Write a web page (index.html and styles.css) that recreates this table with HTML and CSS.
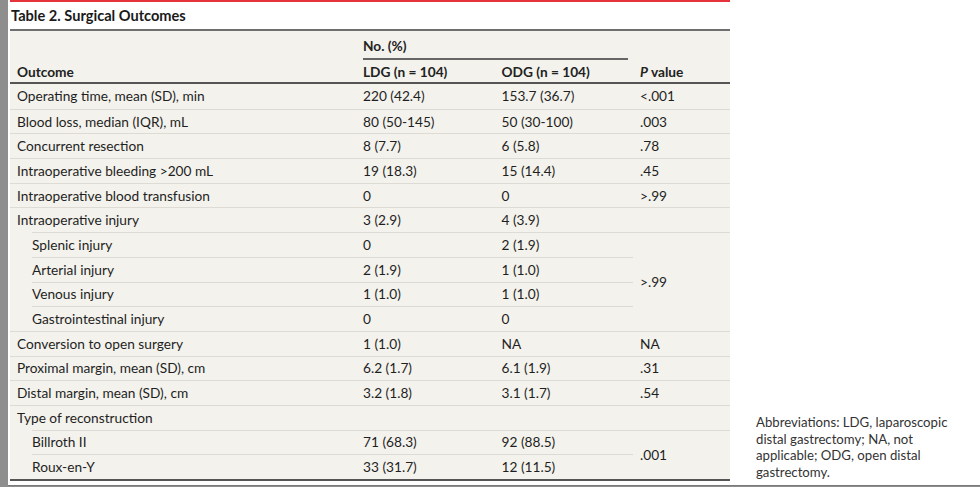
FILE: index.html
```html
<!DOCTYPE html>
<html lang="en">
<head>
<meta charset="utf-8">
<title>Table 2. Surgical Outcomes</title>
<link rel="stylesheet" href="styles.css">
</head>
<body>
<div class="page">
  <div class="strip"></div>
  <div class="panel">
    <div class="content">
      <div class="main">
        <div class="redbar"></div>
        <h2 class="title">Table 2. Surgical Outcomes</h2>
        <table class="data">
          <thead>
            <tr class="h1">
              <th rowspan="2" class="oc">Outcome</th>
              <th colspan="2" class="grp"><div class="grp-label">No. (%)</div></th>
              <th rowspan="2" class="pv"><i>P</i> value</th>
            </tr>
            <tr class="h2">
              <th>LDG (n = 104)</th>
              <th>ODG (n = 104)</th>
            </tr>
          </thead>
          <tbody>
            <tr class="first"><td>Operating time, mean (SD), min</td><td>220 (42.4)</td><td>153.7 (36.7)</td><td>&lt;.001</td></tr>
            <tr><td>Blood loss, median (IQR), mL</td><td>80 (50-145)</td><td>50 (30-100)</td><td>.003</td></tr>
            <tr><td>Concurrent resection</td><td>8 (7.7)</td><td>6 (5.8)</td><td>.78</td></tr>
            <tr><td>Intraoperative bleeding &gt;200 mL</td><td>19 (18.3)</td><td>15 (14.4)</td><td>.45</td></tr>
            <tr><td>Intraoperative blood transfusion</td><td>0</td><td>0</td><td>&gt;.99</td></tr>
            <tr><td>Intraoperative injury</td><td>3 (2.9)</td><td>4 (3.9)</td><td></td></tr>
            <tr><td class="sub">Splenic injury</td><td>0</td><td>2 (1.9)</td><td rowspan="4" class="span">&gt;.99</td></tr>
            <tr><td class="sub">Arterial injury</td><td>2 (1.9)</td><td>1 (1.0)</td></tr>
            <tr><td class="sub">Venous injury</td><td>1 (1.0)</td><td>1 (1.0)</td></tr>
            <tr><td class="sub">Gastrointestinal injury</td><td>0</td><td>0</td></tr>
            <tr><td>Conversion to open surgery</td><td>1 (1.0)</td><td>NA</td><td>NA</td></tr>
            <tr><td>Proximal margin, mean (SD), cm</td><td>6.2 (1.7)</td><td>6.1 (1.9)</td><td>.31</td></tr>
            <tr><td>Distal margin, mean (SD), cm</td><td>3.2 (1.8)</td><td>3.1 (1.7)</td><td>.54</td></tr>
            <tr><td>Type of reconstruction</td><td></td><td></td><td></td></tr>
            <tr><td class="sub">Billroth II</td><td>71 (68.3)</td><td>92 (88.5)</td><td rowspan="2" class="span">.001</td></tr>
            <tr><td class="sub">Roux-en-Y</td><td>33 (31.7)</td><td>12 (11.5)</td></tr>
          </tbody>
        </table>
      </div>
      <p class="note">Abbreviations: LDG, laparoscopic distal gastrectomy; NA, not applicable; ODG, open distal gastrectomy.</p>
    </div>
  </div>
</div>
</body>
</html>
```

FILE: styles.css
```css
html, body {
  margin: 0;
  padding: 0;
}

body {
  background: #8e8e8e;
  font-family: Lato, "Liberation Sans", sans-serif;
  color: #222;
}

.page {
  display: flex;
  width: 980px;
  height: 487px;
  overflow: hidden;
}

.strip {
  width: 8px;
  flex: none;
  background: #8e8e8e;
}

.panel {
  flex: 1;
  height: 485px;
  background: #fff;
  border-bottom: 1px solid #7a7a7a;
}

.content {
  display: flex;
  align-items: flex-end;
  padding-left: 2px;
}

.main {
  width: 720px;
  flex: none;
}

.redbar {
  height: 2px;
  background: #e5323b;
}

.title {
  margin: 0;
  height: 27px;
  font-size: 14.6px;
  line-height: 27px;
  font-weight: 700;
  color: #1a1a1a;
  padding-left: 1px;
}

.data {
  width: 720px;
  border-collapse: separate;
  border-spacing: 0;
  background: #f3f2ec;
  border-top: 2px solid #6f6f6f;
  border-bottom: 2px solid #555;
  font-size: 13.7px;
  table-layout: fixed;
}

.data th {
  font-weight: 700;
  text-align: left;
  padding: 0 7px;
  line-height: 16px;
  color: #222;
}

.data th.oc {
  width: 332px;
}

.data th.pv {
  width: 83px;
}

.data th.oc,
.data th.pv,
.data .h2 th {
  vertical-align: bottom;
  padding-bottom: 2px;
  border-bottom: 2px solid #555;
}

.data .h2 th {
  padding-top: 4px;
}

.data th.grp {
  padding: 0 5px 0 7px;
  vertical-align: bottom;
}

.grp-label {
  padding-top: 7px;
  padding-bottom: 4px;
  border-bottom: 2px solid #666;
}

.data td {
  height: 23.7px;
  padding: 0 7px;
  line-height: 16px;
  border-top: 1px solid #dddbd3;
  vertical-align: middle;
  white-space: nowrap;
  color: #1f1f1f;
}

.data tr.first td {
  border-top: none;
  height: 24.7px;
}

.data td.sub {
  padding-left: 22px;
  border-top: none;
  background: linear-gradient(#dddbd3, #dddbd3) 22px 0 / calc(100% - 22px) 1px no-repeat;
  padding-top: 1px;
}

.data td.span {
  vertical-align: middle;
}

.note {
  margin: 0 0 1px 26px;
  width: 212px;
  font-size: 13.2px;
  line-height: 16.5px;
  color: #333;
}
```
